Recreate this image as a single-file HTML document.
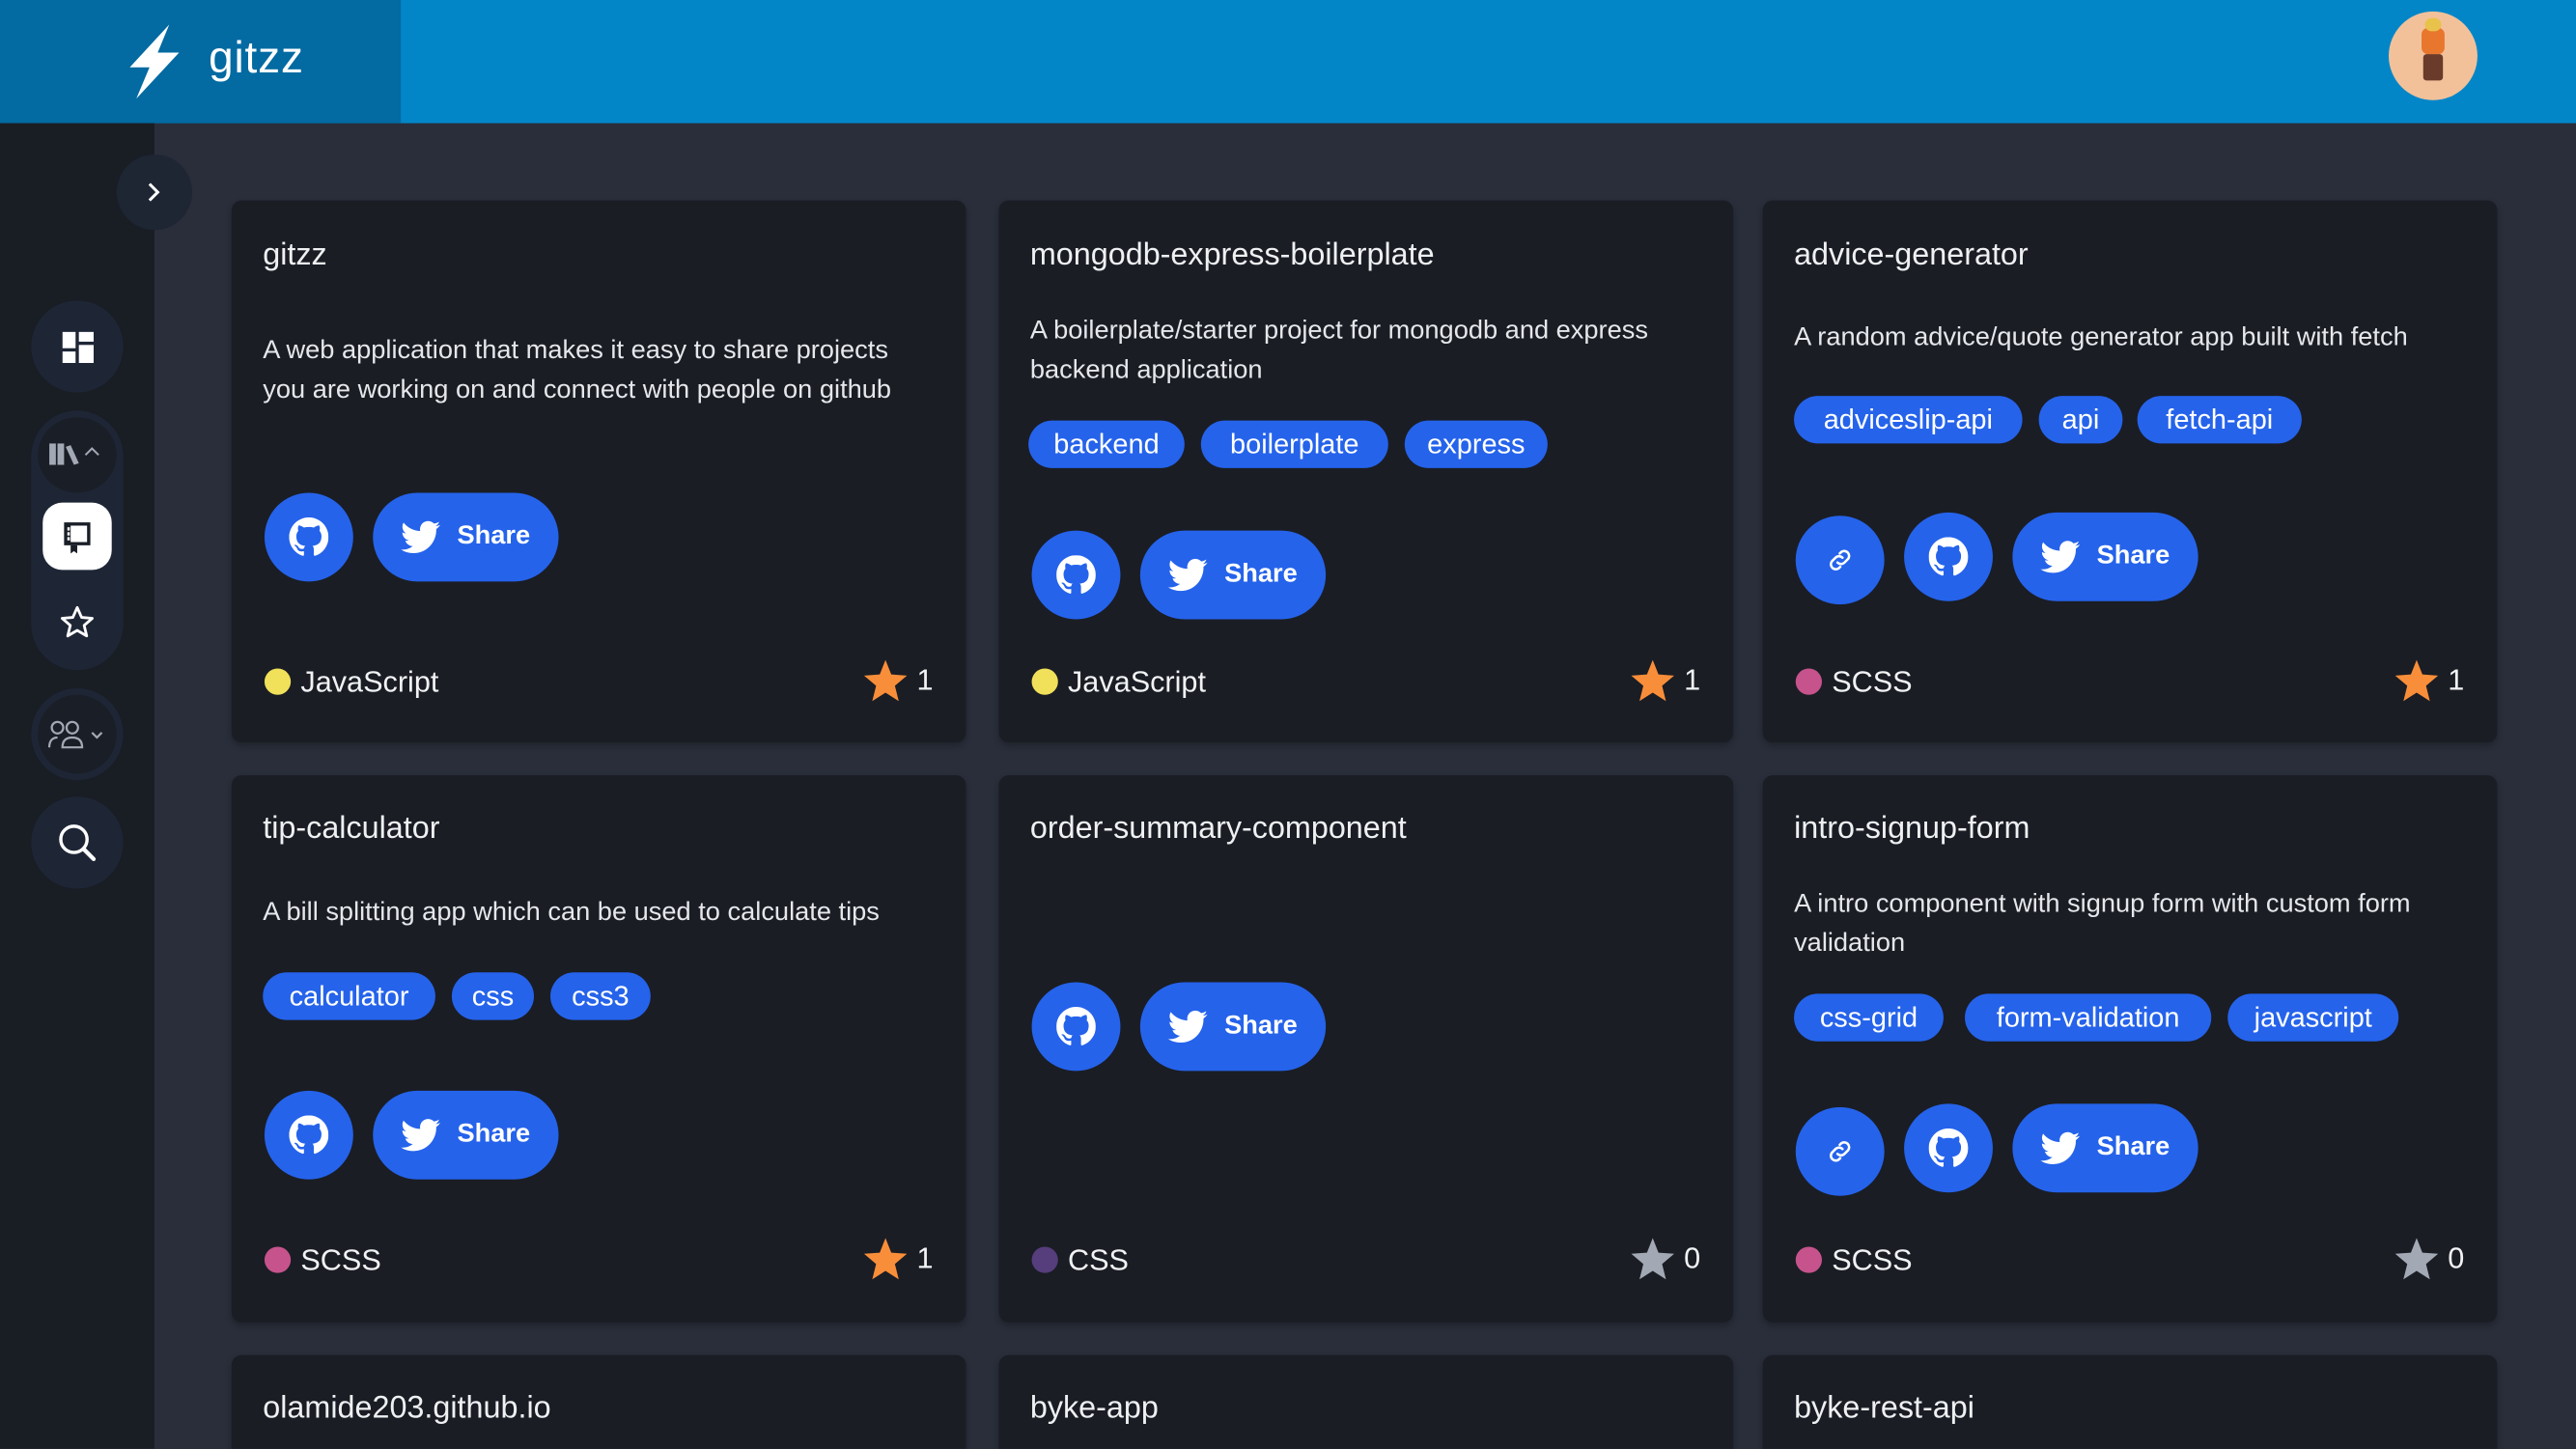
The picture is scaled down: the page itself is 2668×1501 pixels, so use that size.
<!DOCTYPE html>
<html><head><meta charset="utf-8">
<style>
*{margin:0;padding:0;box-sizing:border-box}
html,body{width:2668px;height:1500px;overflow:hidden;background:#292e3a}
#wrap{position:absolute;left:0;top:0;width:1568px;height:882px;overflow:hidden;transform:scale(1.70153);transform-origin:0 0;background:#292e3a;font-family:"Liberation Sans",sans-serif;color:#e8eaed}
.abs{position:absolute}
#hdr{left:0;top:0;width:1568px;height:75px;background:#0386c8}
#logo{left:0;top:0;width:244px;height:75px;background:#036aa2}
#logo span{position:absolute;left:127px;top:20px;font-size:27px;color:#fff;letter-spacing:0.5px}
#side{left:0;top:75px;width:94px;height:807px;background:#191d24}
.circ{position:absolute;border-radius:50%;background:#1e2636;display:flex;align-items:center;justify-content:center}
.card{position:absolute;width:447px;background:#1a1d24;border-radius:6px;box-shadow:0 2px 4px rgba(0,0,0,.25)}
.t{position:absolute;left:19px;font-size:19px;color:#eef0f2;white-space:nowrap;line-height:24px}
.d{position:absolute;left:19px;font-size:16px;line-height:24px;color:#e5e7eb;white-space:nowrap}
.tag{position:absolute;height:29px;border-radius:15px;background:#2563eb;color:#fff;font-size:17px;line-height:29px;text-align:center;white-space:nowrap}
.btn{position:absolute;width:54px;height:54px;border-radius:50%;background:#2563eb;display:flex;align-items:center;justify-content:center}
.share{position:absolute;width:113px;height:54px;border-radius:27px;background:#2563eb;color:#fff;font-size:16px;font-weight:bold;display:flex;align-items:center;justify-content:center;gap:10px}
.lang{position:absolute;left:20px;font-size:18px;line-height:24px;display:flex;align-items:center;gap:6px;color:#f1f2f4}
.dot{width:16px;height:16px;border-radius:50%}
.st{position:absolute;left:384px;display:flex;align-items:center;gap:5px;font-size:18px;color:#f1f2f4}
</style></head><body>
<svg width="0" height="0" style="position:absolute">
<symbol id="gh" viewBox="0 0 16 16"><path fill="#fff" d="M8 0C3.58 0 0 3.58 0 8c0 3.54 2.29 6.53 5.47 7.59.4.07.55-.17.55-.38 0-.19-.01-.82-.01-1.49-2.01.37-2.53-.49-2.69-.94-.09-.23-.48-.94-.82-1.13-.28-.15-.68-.52-.01-.53.63-.01 1.08.58 1.23.82.72 1.21 1.87.87 2.33.66.07-.52.28-.87.51-1.07-1.78-.2-3.64-.89-3.64-3.95 0-.87.31-1.59.82-2.150-.08-.2-.36-1.02.08-2.12 0 0 .67-.21 2.2.82.64-.18 1.32-.27 2-.27.68 0 1.36.09 2 .27 1.53-1.04 2.2-.82 2.2-.82.44 1.1.16 1.92.08 2.12.51.56.82 1.27.82 2.15 0 3.07-1.87 3.75-3.65 3.95.29.25.54.73.54 1.48 0 1.07-.01 1.93-.01 2.2 0 .21.15.46.55.38A8.013 8.013 0 0016 8c0-4.42-3.58-8-8-8z"/></symbol>
<symbol id="tw" viewBox="0 0 24 24"><path fill="#fff" d="M23.95 4.57a10 10 0 01-2.82.77 4.96 4.96 0 002.16-2.72c-.95.55-2 .95-3.12 1.17a4.92 4.92 0 00-8.38 4.48A13.94 13.94 0 011.64 3.16a4.92 4.92 0 001.52 6.57 4.9 4.9 0 01-2.23-.61v.06a4.92 4.92 0 003.95 4.83 4.99 4.99 0 01-2.21.08 4.93 4.93 0 004.6 3.42A9.87 9.87 0 010 19.54a13.94 13.94 0 007.55 2.21c9.06 0 14-7.5 14-13.98 0-.21 0-.42-.02-.63A9.94 9.94 0 0024 4.59z"/></symbol>
<symbol id="star" viewBox="0 0 24 24"><path d="M12 1.5l3 7.6 8.2.6-6.3 5.3 2 8-6.9-4.4-6.9 4.4 2-8L.8 9.7 9 9.1z"/></symbol>
<symbol id="lnk" viewBox="0 0 24 24"><g fill="none" stroke="#fff" stroke-width="2" stroke-linecap="round"><path d="M10 14a4 4 0 005.6 0l3-3a4 4 0 00-5.6-5.6l-1.2 1.2"/><path d="M14 10a4 4 0 00-5.6 0l-3 3a4 4 0 005.6 5.6l1.2-1.2"/></g></symbol>
</svg>
<div id="wrap">
<div id="hdr" class="abs"></div>
<div id="logo" class="abs">
<svg class="abs" style="left:76px;top:14px" width="34" height="47" viewBox="0 0 34 47"><path fill="#fff" d="M27 1 L3 27 L15 27 L7 46 L33 18 L20 18 Z"/></svg>
<span>gitzz</span></div>
<div class="abs" style="left:1454px;top:7px;width:54px;height:54px;border-radius:50%;background:#f2c19a;overflow:hidden">
<div class="abs" style="left:20px;top:10px;width:14px;height:16px;background:#e8762d;border-radius:4px"></div>
<div class="abs" style="left:22px;top:4px;width:10px;height:8px;background:#e8c24a;border-radius:4px"></div>
<div class="abs" style="left:21px;top:26px;width:12px;height:16px;background:#6a3a2a;border-radius:2px"></div>
</div>

<div id="side" class="abs"></div>
<div class="circ" style="left:71px;top:94px;width:46px;height:46px;background:#1e2533"><svg width="14" height="14" viewBox="0 0 14 14"><path d="M4 2l5 5-5 5" fill="none" stroke="#fff" stroke-width="1.8"/></svg></div>
<div class="circ" style="left:19px;top:183px;width:56px;height:56px"><svg width="19" height="19" viewBox="0 0 19 19"><rect x="0" y="0" width="8" height="10" fill="#fff"/><rect x="10" y="0" width="9" height="6" fill="#fff"/><rect x="0" y="12" width="8" height="7" fill="#fff"/><rect x="10" y="8" width="9" height="11" fill="#fff"/></svg></div>
<div class="abs" style="left:19px;top:250px;width:56px;height:158px;border-radius:28px;background:#1e2636"></div>
<div class="circ" style="left:23px;top:254px;width:48px;height:46px;background:#1a1e27"><svg width="34" height="16" viewBox="0 0 34 16"><rect x="0" y="1" width="4" height="13" fill="#a3a9b4"/><rect x="5" y="1" width="4" height="13" fill="#a3a9b4"/><path d="M10 3l3-1 5 11-3 1z" fill="#a3a9b4"/><path d="M22 8l4-4 4 4" fill="none" stroke="#a3a9b4" stroke-width="1.2"/></svg></div>
<div class="circ" style="left:26px;top:306px;width:42px;height:41px;border-radius:12px;background:#fff"><svg width="18" height="20" viewBox="0 0 18 20"><path d="M1 1h16v14H1z" fill="#1a1e27"/><rect x="5" y="3" width="10" height="10" fill="#fff"/><rect x="3" y="4" width="1.5" height="2" fill="#fff"/><rect x="3" y="7" width="1.5" height="2" fill="#fff"/><rect x="3" y="10" width="1.5" height="2" fill="#fff"/><path d="M5 15v5l2-1.5 2 1.5v-5z" fill="#1a1e27"/></svg></div>
<div class="circ" style="left:33px;top:365px;width:28px;height:28px;background:none"><svg width="22" height="22" viewBox="0 0 24 24"><path d="M12 2l2.9 6.6 7.1.6-5.4 4.7 1.7 7L12 17.2 5.7 20.9l1.7-7L2 9.2l7.1-.6z" fill="none" stroke="#fff" stroke-width="1.8" stroke-linejoin="round"/></svg></div>
<div class="circ" style="left:19px;top:419px;width:56px;height:56px"></div>
<div class="circ" style="left:23px;top:423px;width:48px;height:48px;background:#1a1e27"><svg width="36" height="18" viewBox="0 0 36 18"><g fill="none" stroke="#a3a9b4" stroke-width="1.3"><circle cx="6" cy="5" r="3.5"/><circle cx="15" cy="5" r="3.5"/><path d="M1 17c0-4 2-6 5-6M9 17c0-4 2-6 6-6s6 2 6 6z"/><path d="M27 8l3 3 3-3"/></g></svg></div>
<div class="circ" style="left:19px;top:485px;width:56px;height:56px"><svg width="26" height="26" viewBox="0 0 26 26"><circle cx="11" cy="11" r="8" fill="none" stroke="#fff" stroke-width="2"/><path d="M17 17l6 6" stroke="#fff" stroke-width="2.5" stroke-linecap="round"/></svg></div>

<div class="card" style="left:141px;top:122px;height:330px">
<div class="t" style="top:22px">gitzz</div>
<div class="d" style="top:80px">A web application that makes it easy to share projects<br>you are working on and connect with people on github</div>
<div class="btn" style="left:20px;top:178px"><svg width="24" height="24"><use href="#gh"/></svg></div>
<div class="share" style="left:86px;top:178px"><svg width="24" height="24"><use href="#tw"/></svg>Share</div>
<div class="lang" style="top:281px"><div class="dot" style="background:#f1e05a"></div>JavaScript</div>
<div class="st" style="top:278px"><svg width="28" height="28" fill="#f98e3a"><use href="#star"/></svg>1</div>
</div>
<div class="card" style="left:608px;top:122px;height:330px">
<div class="t" style="top:22px">mongodb-express-boilerplate</div>
<div class="d" style="top:68px">A boilerplate/starter project for mongodb and express<br>backend application</div>
<div class="tag" style="left:18px;top:134px;width:95px">backend</div>
<div class="tag" style="left:123px;top:134px;width:114px">boilerplate</div>
<div class="tag" style="left:247px;top:134px;width:87px">express</div>
<div class="btn" style="left:20px;top:201px"><svg width="24" height="24"><use href="#gh"/></svg></div>
<div class="share" style="left:86px;top:201px"><svg width="24" height="24"><use href="#tw"/></svg>Share</div>
<div class="lang" style="top:281px"><div class="dot" style="background:#f1e05a"></div>JavaScript</div>
<div class="st" style="top:278px"><svg width="28" height="28" fill="#f98e3a"><use href="#star"/></svg>1</div>
</div>
<div class="card" style="left:1073px;top:122px;height:330px">
<div class="t" style="top:22px">advice-generator</div>
<div class="d" style="top:72px">A random advice/quote generator app built with fetch</div>
<div class="tag" style="left:19px;top:119px;width:139px">adviceslip-api</div>
<div class="tag" style="left:168px;top:119px;width:51px">api</div>
<div class="tag" style="left:228px;top:119px;width:100px">fetch-api</div>
<div class="btn" style="left:20px;top:192px"><svg width="18" height="18"><use href="#lnk"/></svg></div>
<div class="btn" style="left:86px;top:190px"><svg width="24" height="24"><use href="#gh"/></svg></div>
<div class="share" style="left:152px;top:190px"><svg width="24" height="24"><use href="#tw"/></svg>Share</div>
<div class="lang" style="top:281px"><div class="dot" style="background:#c6538c"></div>SCSS</div>
<div class="st" style="top:278px"><svg width="28" height="28" fill="#f98e3a"><use href="#star"/></svg>1</div>
</div>

<div class="card" style="left:141px;top:472px;height:333px">
<div class="t" style="top:21px">tip-calculator</div>
<div class="d" style="top:72px">A bill splitting app which can be used to calculate tips</div>
<div class="tag" style="left:19px;top:120px;width:105px">calculator</div>
<div class="tag" style="left:134px;top:120px;width:50px">css</div>
<div class="tag" style="left:194px;top:120px;width:61px">css3</div>
<div class="btn" style="left:20px;top:192px"><svg width="24" height="24"><use href="#gh"/></svg></div>
<div class="share" style="left:86px;top:192px"><svg width="24" height="24"><use href="#tw"/></svg>Share</div>
<div class="lang" style="top:283px"><div class="dot" style="background:#c6538c"></div>SCSS</div>
<div class="st" style="top:280px"><svg width="28" height="28" fill="#f98e3a"><use href="#star"/></svg>1</div>
</div>
<div class="card" style="left:608px;top:472px;height:333px">
<div class="t" style="top:21px">order-summary-component</div>
<div class="btn" style="left:20px;top:126px"><svg width="24" height="24"><use href="#gh"/></svg></div>
<div class="share" style="left:86px;top:126px"><svg width="24" height="24"><use href="#tw"/></svg>Share</div>
<div class="lang" style="top:283px"><div class="dot" style="background:#563d7c"></div>CSS</div>
<div class="st" style="top:280px"><svg width="28" height="28" fill="#a3a9b4"><use href="#star"/></svg>0</div>
</div>
<div class="card" style="left:1073px;top:472px;height:333px">
<div class="t" style="top:21px">intro-signup-form</div>
<div class="d" style="top:67px">A intro component with signup form with custom form<br>validation</div>
<div class="tag" style="left:19px;top:133px;width:91px">css-grid</div>
<div class="tag" style="left:123px;top:133px;width:150px">form-validation</div>
<div class="tag" style="left:283px;top:133px;width:104px">javascript</div>
<div class="btn" style="left:20px;top:202px"><svg width="18" height="18"><use href="#lnk"/></svg></div>
<div class="btn" style="left:86px;top:200px"><svg width="24" height="24"><use href="#gh"/></svg></div>
<div class="share" style="left:152px;top:200px"><svg width="24" height="24"><use href="#tw"/></svg>Share</div>
<div class="lang" style="top:283px"><div class="dot" style="background:#c6538c"></div>SCSS</div>
<div class="st" style="top:280px"><svg width="28" height="28" fill="#a3a9b4"><use href="#star"/></svg>0</div>
</div>

<div class="card" style="left:141px;top:825px;height:100px"><div class="t" style="top:21px">olamide203.github.io</div></div>
<div class="card" style="left:608px;top:825px;height:100px"><div class="t" style="top:21px">byke-app</div></div>
<div class="card" style="left:1073px;top:825px;height:100px"><div class="t" style="top:21px">byke-rest-api</div></div>
</div>
</body></html>
